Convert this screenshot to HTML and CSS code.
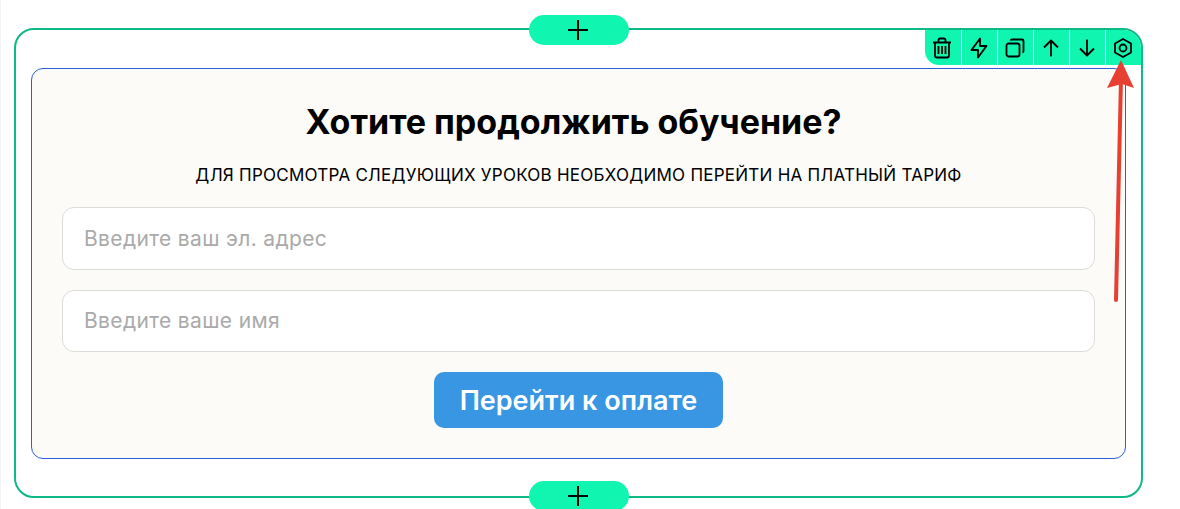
FILE: index.html
```html
<!DOCTYPE html>
<html>
<head>
    <title>Блок оплаты</title>
    <link rel="stylesheet" href="styles.css">
</head>
<body>
    <div class="block">
        <button class="add add-top">
            <svg width="22" height="22" viewBox="0 0 22 22"><path d="M11 1v20M1 11h20" stroke="#000" stroke-width="2" fill="none"/></svg>
        </button>
        <div class="tools">
            <span class="tool">
                <svg width="24" height="24" viewBox="0 0 24 24" class="ico"><path d="M3 6.500h18M8.500 6.500V4A1.500 1.500 0 0 1 10 2.500h4A1.500 1.500 0 0 1 15.500 4v2.500M5 6.500v13A2 2 0 0 0 7 21.500h10a2 2 0 0 0 2-2v-13M8.500 10v8M12 10v8M15.500 10v8"/></svg>
            </span>
            <span class="tool">
                <svg width="24" height="24" viewBox="0 0 24 24" class="ico"><path d="M13 2.500V10h6.500L11 21.500V14H4.500z"/></svg>
            </span>
            <span class="tool">
                <svg width="24" height="24" viewBox="0 0 24 24" class="ico"><rect x="3.500" y="7.500" width="13" height="13" rx="2"/><path d="M7.500 4.500A1.500 1.500 0 0 1 9 3.500h10A1.500 1.500 0 0 1 20.500 5v10a1.500 1.500 0 0 1-1 1.400"/></svg>
            </span>
            <span class="tool">
                <svg width="24" height="24" viewBox="0 0 24 24" class="ico"><path d="M12 4.500v16M5 11.500l7-7 7 7"/></svg>
            </span>
            <span class="tool">
                <svg width="24" height="24" viewBox="0 0 24 24" class="ico"><path d="M12 3.500v16M5 12.500l7 7 7-7"/></svg>
            </span>
            <span class="tool">
                <svg width="24" height="24" viewBox="0 0 24 24" class="ico"><path d="M12 3l8 4.500v9L12 21l-8-4.500v-9z"/><circle cx="12" cy="12" r="3.500"/></svg>
            </span>
        </div>

        <div class="card">
            <h2>Хотите продолжить обучение?</h2>
            <p>Для просмотра следующих уроков необходимо перейти на платный тариф</p>
            <form class="lead-form">
                <input type="text" placeholder="Введите ваш эл. адрес">
                <input type="text" placeholder="Введите ваше имя">
                <button type="button" class="pay">Перейти к оплате</button>
            </form>
        </div>

        <button class="add add-bottom">
            <svg width="22" height="22" viewBox="0 0 22 22"><path d="M11 1v20M1 11h20" stroke="#000" stroke-width="2" fill="none"/></svg>
        </button>
    </div>

    <svg class="arrow" width="40" height="250" viewBox="0 0 40 250">
        <path d="M17 241L22 20" stroke="#e83f33" stroke-width="4" stroke-linecap="round" fill="none"/>
        <path d="M22 1L35 29L23 25L8 29z" fill="#e83f33"/>
    </svg>
</body>
</html>
```

FILE: styles.css
```css
html, body {
    height: 100%;
}
body {
    margin: 0;
    padding: 28px 0 0 14px;
    box-sizing: border-box;
    overflow: hidden;
    background: white;
    border-left: 1px solid #f3f3f3;
    font-family: "Inter", "Noto Sans", sans-serif;
    color: #000;
}
.block {
    position: relative;
    box-sizing: border-box;
    width: 1129px;
    height: 470px;
    margin-left: -1px;
    padding: 38px 15px 0;
    border: 2px solid #0cb987;
    border-radius: 20px;
}
.add {
    position: absolute;
    left: 513px;
    display: flex;
    align-items: center;
    justify-content: center;
    width: 100px;
    height: 30px;
    padding: 0;
    border: none;
    border-radius: 15px;
    background: #10f5b0;
}
.add svg {
    margin-left: -2px;
}
.add-top {
    top: -15px;
}
.add-bottom {
    top: 451px;
}
.tools {
    position: absolute;
    top: 0;
    right: 0;
    display: flex;
    height: 35px;
    background: #10f5b0;
    border-radius: 0 18px 0 14px;
    overflow: hidden;
}
.tool {
    box-sizing: border-box;
    display: flex;
    align-items: center;
    justify-content: center;
    width: 36px;
    border-left: 1px solid white;
}
.tool:first-child {
    border-left: none;
}
.ico {
    margin-left: -2px;
    fill: none;
    stroke: #000;
    stroke-width: 1.800;
    stroke-linejoin: round;
}
.card {
    box-sizing: border-box;
    width: 1095px;
    height: 391px;
    padding: 32px 30px 0;
    border: 1px solid #2a5fd8;
    border-radius: 12px;
    background: #fcfbf7;
    text-align: center;
}
h2 {
    margin: 0 10px 0 0;
    font-size: 34px;
    line-height: 42px;
    font-weight: 700;
}
p {
    margin: 21px 0 0;
    font-size: 17px;
    line-height: 22px;
    letter-spacing: 0.250px;
    text-transform: uppercase;
}
.lead-form {
    display: flex;
    flex-direction: column;
    align-items: center;
    gap: 20px;
    margin-top: 21px;
}
input {
    box-sizing: border-box;
    width: 100%;
    height: 62.500px;
    padding: 0 21px;
    border: 1px solid #dcdcd8;
    border-radius: 12px;
    background: white;
    font-family: inherit;
    font-size: 21px;
    letter-spacing: 0.350px;
}
input::placeholder {
    color: #aaa;
}
.pay {
    width: 289px;
    height: 56px;
    border: none;
    border-radius: 10px;
    background: #3896e3;
    color: white;
    font-family: inherit;
    font-size: 27px;
    font-weight: 600;
}
.arrow {
    position: absolute;
    left: 1099px;
    top: 59px;
}
```
